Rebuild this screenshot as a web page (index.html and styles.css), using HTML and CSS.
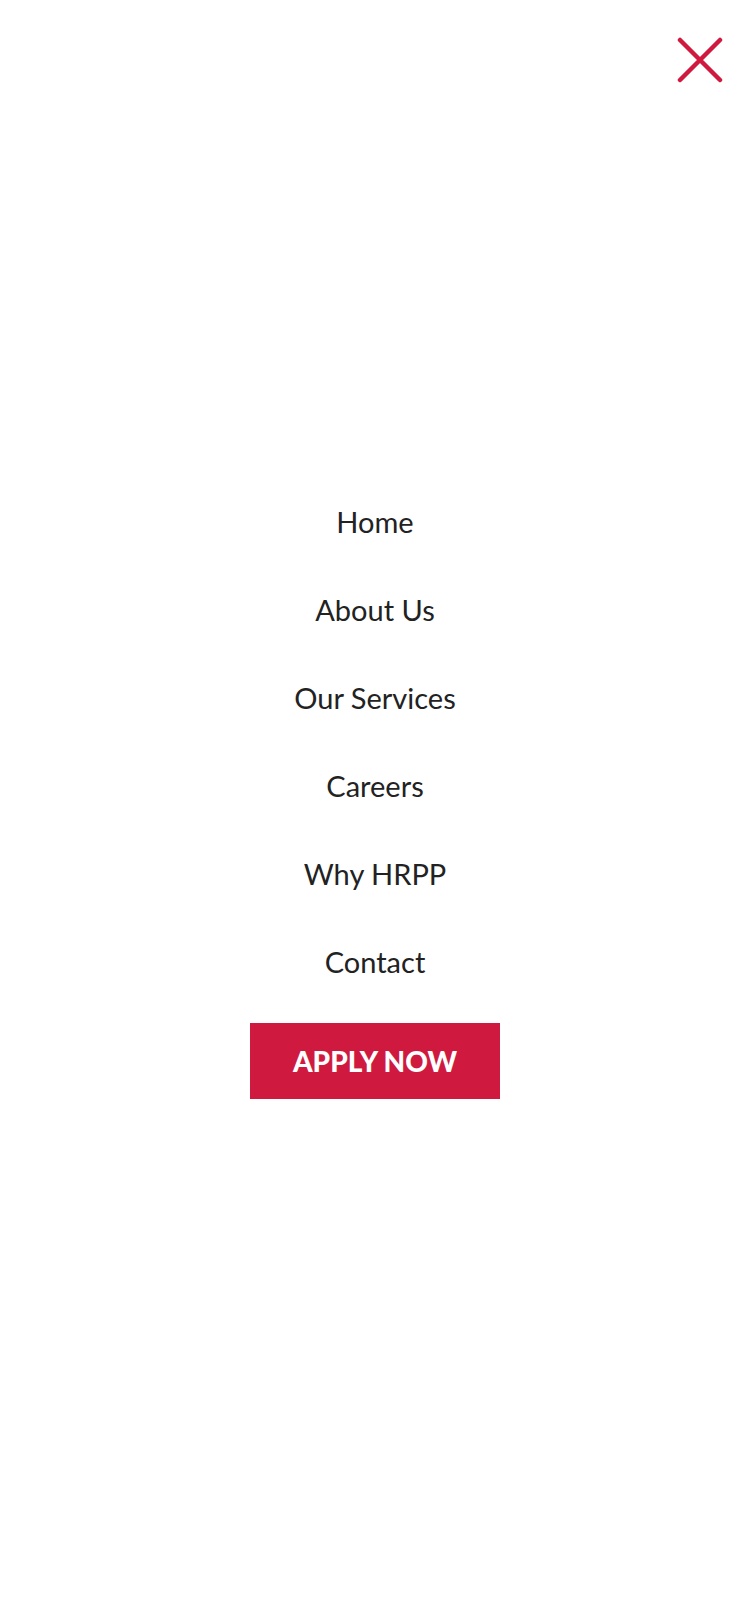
FILE: index.html
```html
<!DOCTYPE html>
<html lang="en">
<head>
<meta charset="utf-8">
<title>Menu</title>
<link rel="stylesheet" href="styles.css">
</head>
<body>
<div class="overlay">
  <header class="top">
    <button class="close" aria-label="Close menu">
      <svg width="46" height="46" viewBox="0 0 46 46" aria-hidden="true">
        <path d="M3 3 L43 43 M43 3 L3 43" stroke="#d0193e" stroke-width="4.5" stroke-linecap="round" fill="none"/>
      </svg>
    </button>
  </header>
  <nav class="menu">
    <ul class="menu-list">
      <li><a href="#">Home</a></li>
      <li><a href="#">About Us</a></li>
      <li><a href="#">Our Services</a></li>
      <li><a href="#">Careers</a></li>
      <li><a href="#">Why HRPP</a></li>
      <li><a href="#">Contact</a></li>
    </ul>
    <a class="apply" href="#">APPLY NOW</a>
  </nav>
</div>
</body>
</html>
```

FILE: styles.css
```css
* { box-sizing: border-box; }
html, body {
  margin: 0;
  padding: 0;
  background: #ffffff;
}
body {
  font-family: "Lato", "Liberation Sans", sans-serif;
  color: #222222;
}
.overlay {
  width: 750px;
  min-height: 1600px;
  display: flex;
  flex-direction: column;
}
.top {
  display: flex;
  justify-content: flex-end;
  padding: 37px 27px 0 0;
}
.close {
  border: 0;
  background: none;
  padding: 0;
  width: 46px;
  height: 46px;
  cursor: pointer;
}
.close svg { display: block; }
.menu {
  display: flex;
  flex-direction: column;
  align-items: center;
  padding-top: 395px;
}
.menu-list {
  list-style: none;
  margin: 0;
  padding: 0;
  text-align: center;
}
.menu-list li {
  height: 88px;
  line-height: 88px;
}
.menu-list a {
  font-size: 29px;
  color: #222222;
  text-decoration: none;
}
.apply {
  margin-top: 17px;
  width: 250px;
  height: 76px;
  background: #d0193e;
  color: #ffffff;
  font-weight: 900;
  font-size: 28px;
  text-decoration: none;
  display: flex;
  align-items: center;
  justify-content: center;
}
```
